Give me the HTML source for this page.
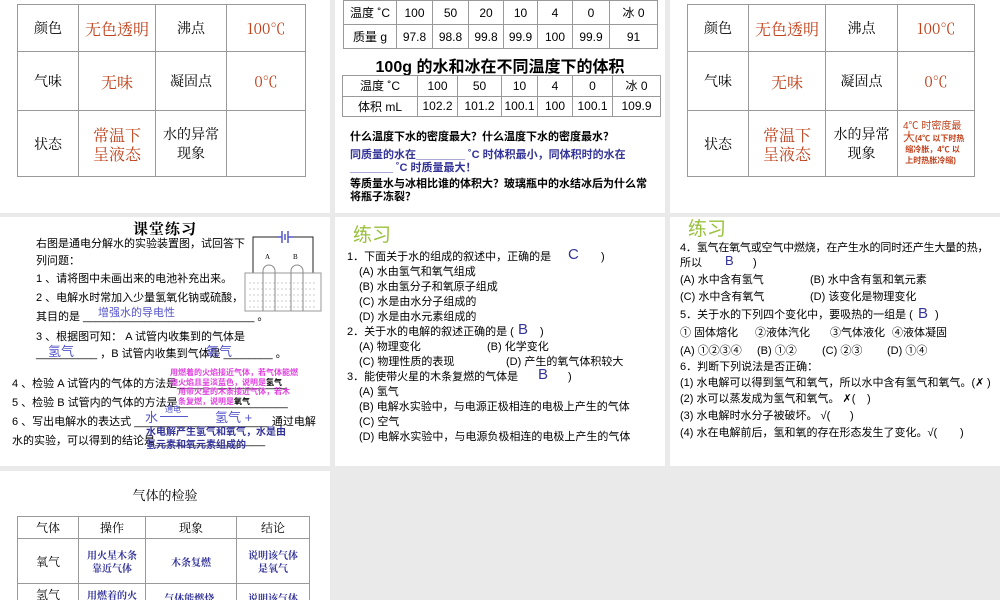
<!DOCTYPE html>
<html><head><meta charset="utf-8"><style>
*{margin:0;padding:0;box-sizing:border-box}
body{width:1000px;height:600px;background:#eaeaea;position:relative;overflow:hidden;font-family:"Liberation Sans","Noto Sans CJK SC",sans-serif;color:#000}
.p{position:absolute;background:#fff;overflow:hidden}
.a{position:absolute;white-space:nowrap}
table{position:absolute;border-collapse:collapse}
td{border:1px solid #999;text-align:center;vertical-align:middle;padding:0}
.s{font-family:"Noto Serif CJK SC","Liberation Serif",serif}
.r{color:#c0401a}
.b{color:#333399}
.t{font-size:10px;font-weight:bold}
.g{color:#99c03c;font-size:19px}
.m{position:absolute;color:#333399;font-size:15px}
.q .a{line-height:16px}
</style></head><body>

<!-- Panel 1 -->
<div class="p" style="left:0;top:0;width:330px;height:213px">
<table class="s" style="left:17px;top:4px;width:289px;height:173px;font-size:14px">
<tr style="height:47px"><td style="width:61px">颜色</td><td class="r" style="width:77px;font-size:16px">无色透明</td><td style="width:71px">沸点</td><td class="r" style="font-size:15px">100℃</td></tr>
<tr style="height:59px"><td>气味</td><td class="r" style="font-size:16px">无味</td><td>凝固点</td><td class="r" style="font-size:15px">0℃</td></tr>
<tr><td>状态</td><td class="r" style="font-size:16px;line-height:19px">常温下<br>呈液态</td><td style="line-height:19px">水的异常<br>现象</td><td></td></tr>
</table>
</div>

<!-- Panel 2 -->
<div class="p" style="left:335px;top:0;width:330px;height:213px">
<table style="left:8px;top:0;width:315px;height:49px;font-size:12px;border:1.5px solid #888">
<tr><td style="width:53px">温度 ˚C</td><td style="width:36px">100</td><td style="width:36px">50</td><td style="width:35px">20</td><td style="width:34px">10</td><td style="width:35px">4</td><td style="width:37px">0</td><td>冰 0</td></tr>
<tr><td>质量 g</td><td>97.8</td><td>98.8</td><td>99.8</td><td>99.9</td><td>100</td><td>99.9</td><td>91</td></tr>
</table>
<div class="a" style="left:0;width:330px;text-align:center;top:53px;font-size:16px;font-weight:600">100g 的水和冰在不同温度下的体积</div>
<table style="left:7px;top:75px;width:319px;height:42px;font-size:12px;border:1.5px solid #888">
<tr><td style="width:75px">温度 ˚C</td><td style="width:40px">100</td><td style="width:44px">50</td><td style="width:36px">10</td><td style="width:35px">4</td><td style="width:40px">0</td><td>冰 0</td></tr>
<tr><td>体积 mL</td><td>102.2</td><td>101.2</td><td>100.1</td><td>100</td><td>100.1</td><td>109.9</td></tr>
</table>
<div class="a t" style="left:15px;top:128px;font-size:11px">什么温度下水的密度最大？什么温度下水的密度最水？</div>
<div class="a t b" style="left:15px;top:146px;font-size:11px">同质量的水在________ ˚C 时体积最小，同体积时的水在</div>
<div class="a t b" style="left:15px;top:159px;font-size:11px">_______ ˚C 时质量最大！</div>
<div class="a t" style="left:15px;top:175px;font-size:11px">等质量水与冰相比谁的体积大？玻璃瓶中的水结冰后为什么常</div>
<div class="a t" style="left:15px;top:188px;font-size:11px">将瓶子冻裂？</div>
</div>

<!-- Panel 3 -->
<div class="p" style="left:670px;top:0;width:330px;height:213px">
<table class="s" style="left:17px;top:4px;width:288px;height:173px;font-size:14px">
<tr style="height:47px"><td style="width:61px">颜色</td><td class="r" style="width:77px;font-size:16px">无色透明</td><td style="width:72px">沸点</td><td class="r" style="font-size:15px">100℃</td></tr>
<tr style="height:59px"><td>气味</td><td class="r" style="font-size:16px">无味</td><td>凝固点</td><td class="r" style="font-size:15px">0℃</td></tr>
<tr><td>状态</td><td class="r" style="font-size:16px;line-height:19px">常温下<br>呈液态</td><td style="line-height:19px">水的异常<br>现象</td><td class="r" style="font-family:'Liberation Sans','Noto Sans CJK SC',sans-serif;font-size:8px;line-height:11px;text-align:left;padding-left:5px;font-weight:bold"><span style="font-size:10px;font-weight:normal">4℃ 时密度最</span><br><span style="font-size:12px;font-weight:normal">大</span>(4℃ 以下时热<br>&nbsp;缩冷胀，4℃ 以<br>&nbsp;上时热胀冷缩)</td></tr>
</table>
</div>

<!-- Panel 4 -->
<div class="p" style="left:0;top:217px;width:330px;height:249px;font-size:11px">
<div class="a s" style="left:0;width:330px;text-align:center;top:1px;font-size:15px;font-weight:bold;letter-spacing:1px">课堂练习</div>
<div class="a" style="left:36px;top:18px">右图是通电分解水的实验装置图，试回答下</div>
<div class="a" style="left:36px;top:35px">列问题：</div>
<div class="a" style="left:36px;top:53px">1 、请将图中未画出来的电池补充出来。</div>
<div class="a" style="left:36px;top:72px">2 、电解水时常加入少量氢氧化钠或硫酸，</div>
<div class="a" style="left:36px;top:91px">其目的是 ____________________________ 。</div>
<div class="a b" style="left:98px;top:87px;color:#5555cc">增强水的导电性</div>
<div class="a" style="left:36px;top:111px">3 、根据图可知： A 试管内收集到的气体是</div>
<div class="a" style="left:36px;top:128px">__________ ，B 试管内收集到气体是 ________ 。</div>
<div class="a" style="left:48px;top:124px;color:#5555cc;font-size:13px">氢气</div>
<div class="a" style="left:206px;top:124px;color:#5555cc;font-size:13px">氧气</div>
<div class="a" style="left:12px;top:158px">4 、检验 A 试管内的气体的方法是__________________</div>
<div class="a" style="left:12px;top:177px">5 、检验 B 试管内的气体的方法是__________________</div>
<div class="a" style="left:12px;top:196px">6 、写出电解水的表达式 ______________________ 通过电解</div>
<div class="a" style="left:12px;top:215px">水的实验，可以得到的结论是__________________</div>
<div class="a" style="left:170px;top:151px;font-size:8px;font-weight:bold;color:#e040e0;line-height:10px">用燃着的火焰接近气体，若气体能燃<br>烧火焰且呈淡蓝色，说明是<span style="color:#000">氢气</span></div>
<div class="a" style="left:178px;top:170px;font-size:8px;font-weight:bold;color:#e040e0;line-height:10px">用带火星的木条接近气体，若木<br>条复燃，说明是<span style="color:#000">氧气</span></div>
<div class="a" style="left:145px;top:190px;font-size:13px;color:#5555cc">水</div>
<div class="a" style="left:165px;top:187px;font-size:8px;color:#5555cc">通电</div>
<div class="a" style="left:160px;top:199px;width:28px;border-top:1px solid #5555cc"></div>
<div class="a" style="left:215px;top:190px;font-size:13px;color:#5555cc">氢气 +</div>
<div class="a" style="left:146px;top:209px;font-size:10px;font-weight:bold;color:#333399;line-height:13px">水电解产生氢气和氧气，水是由<br>氢元素和氧元素组成的</div>
<svg class="a" style="left:244px;top:10px" width="78" height="100" viewBox="0 0 78 100">
<rect x="9" y="10" width="60" height="70" fill="none" stroke="#222" stroke-width="1"/>
<rect x="34" y="6" width="12" height="8" fill="#fff"/>
<path d="M33 10h5M38 4v12M41 7v6M44 4v12M44 10h5" stroke="#5555cc" stroke-width="1.5" fill="none"/>
<rect x="1" y="46" width="76" height="38" fill="#fff" stroke="#999" stroke-width="1"/>
<path d="M5 56h68M5 62h68M5 68h68M5 74h68M5 80h68" stroke="#ccc" stroke-dasharray="2 2"/>
<path d="M19 84V44a6 6 0 0 1 12 0v40M47 84V44a6 6 0 0 1 12 0v40" fill="none" stroke="#888"/>
<text x="21" y="32" font-size="7" font-family="Liberation Serif">A</text>
<text x="49" y="32" font-size="7" font-family="Liberation Serif">B</text>
</svg>
</div>

<!-- Panel 5 -->
<div class="p q" style="left:335px;top:217px;width:330px;height:249px;font-size:11px">
<div class="a g" style="left:18px;top:3px;line-height:normal">练习</div>
<div class="a" style="left:12px;top:32px">1．下面关于水的组成的叙述中，正确的是</div>
<div class="m" style="left:233px;top:29px">C</div><div class="a" style="left:266px;top:32px">)</div>
<div class="a" style="left:24px;top:47px">(A) 水由氢气和氧气组成</div>
<div class="a" style="left:24px;top:62px">(B) 水由氢分子和氧原子组成</div>
<div class="a" style="left:24px;top:77px">(C) 水是由水分子组成的</div>
<div class="a" style="left:24px;top:92px">(D) 水是由水元素组成的</div>
<div class="a" style="left:12px;top:107px">2．关于水的电解的叙述正确的是 (</div>
<div class="m" style="left:183px;top:104px">B</div><div class="a" style="left:205px;top:107px">)</div>
<div class="a" style="left:24px;top:122px">(A) 物理变化</div>
<div class="a" style="left:152px;top:122px">(B) 化学变化</div>
<div class="a" style="left:24px;top:137px">(C) 物理性质的表现</div>
<div class="a" style="left:171px;top:137px">(D) 产生的氧气体积较大</div>
<div class="a" style="left:12px;top:152px">3．能使带火星的木条复燃的气体是</div>
<div class="m" style="left:203px;top:149px">B</div><div class="a" style="left:233px;top:152px">)</div>
<div class="a" style="left:24px;top:167px">(A) 氢气</div>
<div class="a" style="left:24px;top:182px">(B) 电解水实验中，与电源正极相连的电极上产生的气体</div>
<div class="a" style="left:24px;top:197px">(C) 空气</div>
<div class="a" style="left:24px;top:212px">(D) 电解水实验中，与电源负极相连的电极上产生的气体</div>
</div>

<!-- Panel 6 -->
<div class="p q" style="left:670px;top:217px;width:330px;height:249px;font-size:11px">
<div class="a g" style="left:18px;top:-3px;line-height:normal">练习</div>
<div class="a" style="left:10px;top:23px;letter-spacing:-0.2px">4．氢气在氧气或空气中燃烧，在产生水的同时还产生大量的热，</div>
<div class="a" style="left:10px;top:38px">所以</div>
<div class="m" style="left:55px;top:36px;font-size:13px">B</div><div class="a" style="left:83px;top:38px">)</div>
<div class="a" style="left:10px;top:55px">(A) 水中含有氢气</div>
<div class="a" style="left:140px;top:55px">(B) 水中含有氢和氧元素</div>
<div class="a" style="left:10px;top:72px">(C) 水中含有氧气</div>
<div class="a" style="left:140px;top:72px">(D) 该变化是物理变化</div>
<div class="a" style="left:10px;top:90px">5．关于水的下列四个变化中，要吸热的一组是 (</div>
<div class="m" style="left:248px;top:88px">B</div><div class="a" style="left:265px;top:90px">)</div>
<div class="a" style="left:10px;top:108px">① 固体熔化</div>
<div class="a" style="left:85px;top:108px">②液体汽化</div>
<div class="a" style="left:160px;top:108px">③气体液化</div>
<div class="a" style="left:222px;top:108px">④液体凝固</div>
<div class="a" style="left:10px;top:126px">(A) ①②③④</div>
<div class="a" style="left:87px;top:126px">(B) ①②</div>
<div class="a" style="left:152px;top:126px">(C) ②③</div>
<div class="a" style="left:217px;top:126px">(D) ①④</div>
<div class="a" style="left:10px;top:142px">6．判断下列说法是否正确：</div>
<div class="a" style="left:10px;top:158px">(1) 水电解可以得到氢气和氧气，所以水中含有氢气和氧气。(✗</div><div class="a" style="left:317px;top:158px">)</div>
<div class="a" style="left:10px;top:174px">(2) 水可以蒸发成为氢气和氧气。 ✗(</div><div class="a" style="left:197px;top:174px">)</div>
<div class="a" style="left:10px;top:191px">(3) 水电解时水分子被破坏。 √(</div><div class="a" style="left:180px;top:191px">)</div>
<div class="a" style="left:10px;top:208px">(4) 水在电解前后，氢和氧的存在形态发生了变化。√(</div><div class="a" style="left:290px;top:208px">)</div>
</div>

<!-- Panel 7 -->
<div class="p" style="left:0;top:471px;width:330px;height:129px">
<div class="a s" style="left:0;width:330px;text-align:center;top:14px;font-size:13px">气体的检验</div>
<table class="s" style="left:17px;top:45px;width:293px;font-size:12px;border:1px solid #888">
<tr style="height:22px"><td style="width:61px">气体</td><td style="width:67px">操作</td><td style="width:91px">现象</td><td>结论</td></tr>
<tr style="height:45px"><td>氧气</td><td class="b t" style="font-size:10px;line-height:13px">用火星木条<br>靠近气体</td><td class="b t">木条复燃</td><td class="b t" style="line-height:13px">说明该气体<br>是氧气</td></tr>
<tr style="height:30px"><td style="vertical-align:top;padding-top:2px">氢气</td><td class="b t" style="vertical-align:top;padding-top:3px">用燃着的火</td><td class="b t" style="vertical-align:top;padding-top:6px">气体能燃烧,</td><td class="b t" style="vertical-align:top;padding-top:6px">说明该气体</td></tr>
</table>
</div>
</body></html>
